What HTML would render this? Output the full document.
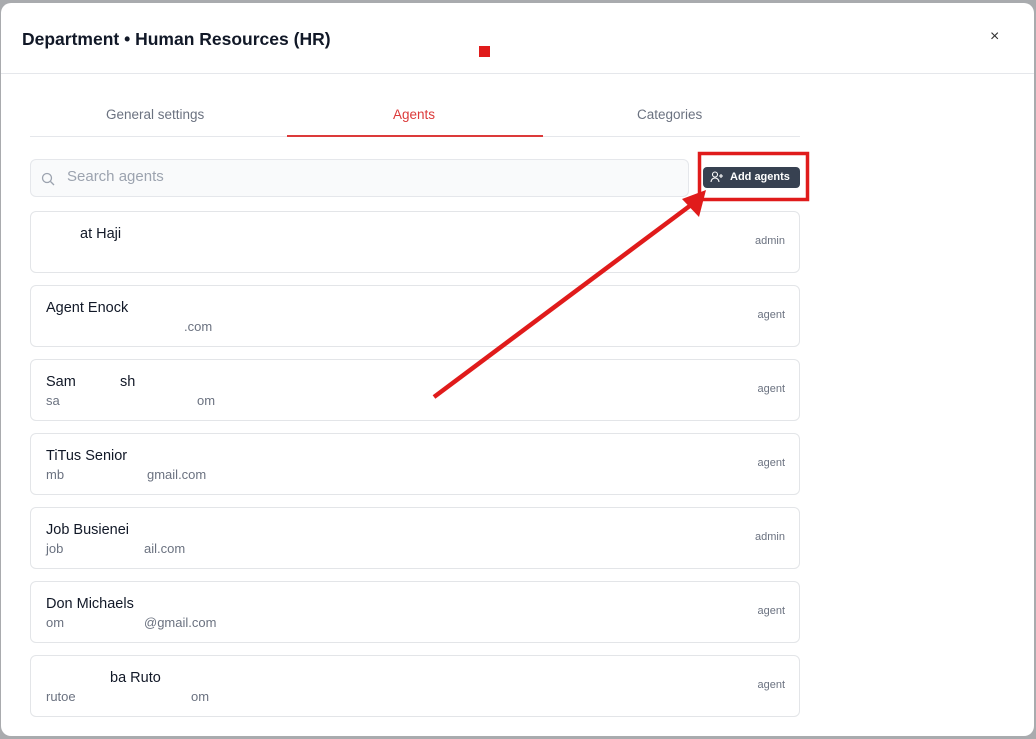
<!DOCTYPE html>
<html><head><meta charset="utf-8"><style>
*{margin:0;padding:0;box-sizing:border-box}
body{width:1036px;height:739px;background:#a9abae;position:relative;overflow:hidden;font-family:"Liberation Sans",sans-serif}
.modal{position:absolute;left:1px;top:3px;width:1033px;height:733px;background:#fff;border-radius:10px;overflow:hidden}
.a{position:absolute;white-space:nowrap}
.card{position:absolute;left:29px;width:770px;height:62px;border:1px solid #e3e5e8;border-radius:6px;background:#fff}
.n{position:absolute;font-size:14.5px;color:#111827;top:14px}
.e{position:absolute;font-size:13px;color:#6b7280;top:33px}
.r{position:absolute;right:14px;top:23px;font-size:11px;color:#6b7280}
</style></head><body>
<div class="modal">
 <div class="a" style="left:21px;top:26px;font-size:17.5px;font-weight:bold;color:#111827">Department • Human Resources (HR)</div>
 <div class="a" style="left:478px;top:43px;width:11px;height:11px;background:#e01b1b"></div>
 <div class="a" style="left:989px;top:25px;font-size:16px;color:#333">×</div>
 <div class="a" style="left:0;top:70px;width:1033px;height:1px;background:#e5e7eb"></div>
 <div class="a" style="left:29px;top:133px;width:770px;height:1px;background:#e5e7eb"></div>
 <div class="a" style="left:286px;top:132px;width:256px;height:2px;background:#dc3a3a"></div>
 <div class="a" style="left:105px;top:104px;font-size:13.5px;color:#6b7280">General settings</div>
 <div class="a" style="left:392px;top:104px;font-size:13.5px;color:#dc3a3a">Agents</div>
 <div class="a" style="left:636px;top:104px;font-size:13.5px;color:#6b7280">Categories</div>
 <div class="a" style="left:29px;top:156px;width:659px;height:38px;border:1px solid #e5e7eb;border-radius:6px;background:#f9fafb"></div>
 <svg class="a" style="left:40px;top:169px" width="14" height="14" viewBox="0 0 14 14" fill="none" stroke="#9ca3af" stroke-width="1.3"><circle cx="6" cy="6" r="4.5"/><path d="M9.5 9.5L13 13"/></svg>
 <div class="a" style="left:66px;top:165px;font-size:15px;color:#9ca3af">Search agents</div>
 <div class="a" style="left:702px;top:164px;width:97px;height:21px;background:#374151;border-radius:4px"></div>
 <svg class="a" style="left:709px;top:168px" width="14" height="12" viewBox="0 0 14 12" fill="none" stroke="#fff" stroke-width="1.1"><circle cx="5" cy="3.5" r="2.5"/><path d="M1 11c0-2.5 2-4 4-4s4 1.5 4 4M11 3v4M9 5h4"/></svg>
 <div class="a" style="left:729px;top:168px;font-size:11px;font-weight:bold;color:#fff">Add agents</div>

 <div class="card" style="top:208px"><span class="n" style="left:49px">at Haji</span><span class="r">admin</span></div>
 <div class="card" style="top:282px"><span class="n" style="left:15px">Agent Enock</span><span class="e" style="left:153px">.com</span><span class="r">agent</span></div>
 <div class="card" style="top:356px"><span class="n" style="left:15px">Sam</span><span class="n" style="left:89px">sh</span><span class="e" style="left:15px">sa</span><span class="e" style="left:166px">om</span><span class="r">agent</span></div>
 <div class="card" style="top:430px"><span class="n" style="left:15px">TiTus Senior</span><span class="e" style="left:15px">mb</span><span class="e" style="left:116px">gmail.com</span><span class="r">agent</span></div>
 <div class="card" style="top:504px"><span class="n" style="left:15px">Job Busienei</span><span class="e" style="left:15px">job</span><span class="e" style="left:113px">ail.com</span><span class="r">admin</span></div>
 <div class="card" style="top:578px"><span class="n" style="left:15px">Don Michaels</span><span class="e" style="left:15px">om</span><span class="e" style="left:113px">@gmail.com</span><span class="r">agent</span></div>
 <div class="card" style="top:652px"><span class="n" style="left:79px">ba Ruto</span><span class="e" style="left:15px">rutoe</span><span class="e" style="left:160px">om</span><span class="r">agent</span></div>

 <svg class="a" style="left:0;top:0" width="1033" height="733">
  <rect x="698.5" y="150.5" width="108" height="46" fill="none" stroke="#e01b1b" stroke-width="3.5"/>
  <line x1="433" y1="394" x2="690" y2="202" stroke="#e01b1b" stroke-width="4.5"/>
  <polygon points="705,187 681,196 698,214" fill="#e01b1b"/>
 </svg>
</div>
</body></html>
